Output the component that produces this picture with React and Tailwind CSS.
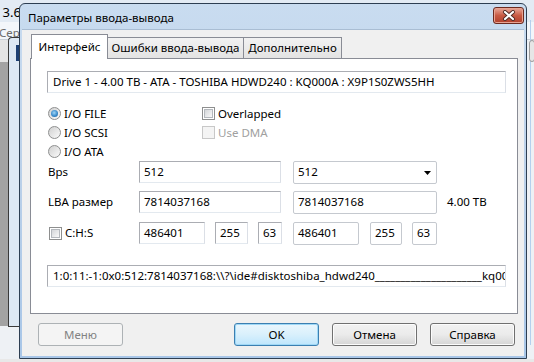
import React from "react";

const F = "font-['Noto_Sans',sans-serif]";

function Edit({ className = "", children }) {
  return (
    <div
      className={`h-[22px] shrink-0 border border-t-[#abadb3] border-l-[#abadb3] border-r-[#dbdfe6] border-b-[#e3e9ef] bg-white flex items-center pl-[4px] overflow-hidden whitespace-nowrap text-[11.5px] text-black ${className}`}
    >
      {children}
    </div>
  );
}

function Box({ className = "", children }) {
  return (
    <div
      className={`h-[23px] shrink-0 border border-[#c5c9cf] rounded-[2px] bg-white flex items-center pl-[4px] overflow-hidden whitespace-nowrap text-[11.5px] text-black ${className}`}
    >
      {children}
    </div>
  );
}

function Radio({ checked }) {
  return (
    <div className="w-[13px] h-[13px] rounded-full border border-[#8e8f8f] bg-gradient-to-br from-[#d0d0d0] to-[#fbfbfb] flex items-center justify-center shrink-0">
      {checked && (
        <div className="w-[7px] h-[7px] rounded-full bg-[radial-gradient(circle_at_45%_40%,#9fd6f7_0%,#3b8ccc_55%,#1b5a94_100%)]" />
      )}
    </div>
  );
}

function Check({ disabled }) {
  return disabled ? (
    <div className="w-[13px] h-[13px] border border-[#c8c8c8] bg-[#f4f4f4] shrink-0" />
  ) : (
    <div className="w-[13px] h-[13px] border border-[#8e8f8f] bg-white p-[1px] shrink-0">
      <div className="w-full h-full border border-[#b4b8bd] bg-gradient-to-br from-[#d4d6d9] to-[#f9f9f9]" />
    </div>
  );
}

function Button({ children, kind }) {
  if (kind === "disabled")
    return (
      <div className="w-[85px] h-[23px] rounded-[3px] border border-[#adb2b5] bg-[#f4f4f4] flex items-center justify-center text-[11.5px] text-[#838383]">
        {children}
      </div>
    );
  if (kind === "default")
    return (
      <div className="w-[85px] h-[23px] rounded-[3px] border border-[#3c7fb1] bg-gradient-to-b from-[#eaf6fd] via-[#d9f0fc] to-[#bee6fd] shadow-[inset_0_0_0_1px_#9fd8f6] flex items-center justify-center text-[11.5px] text-black">
        {children}
      </div>
    );
  return (
    <div className="w-[85px] h-[23px] rounded-[3px] border border-[#707070] bg-gradient-to-b from-[#f2f2f2] via-[#ebebeb] to-[#d5d5d5] shadow-[inset_0_0_0_1px_#fcfcfc] flex items-center justify-center text-[11.5px] text-black">
      {children}
    </div>
  );
}

export default function App() {
  return (
    <div className={`relative w-[534px] h-[362px] overflow-hidden bg-[#eef1f5] ${F}`}>
      {/* background application */}
      <div className="absolute left-0 top-0 w-[534px] h-[22px] bg-[#e3ebf4]" />
      <div className="absolute left-[-8px] top-[3px] text-[13px] text-black whitespace-nowrap">E 3.6</div>
      <div className="absolute left-0 top-[22px] w-[534px] h-[17px] bg-[#f3f6fa]" />
      <div className="absolute left-[-1px] top-[24px] text-[11.5px] text-[#6d6d6d] whitespace-nowrap">Серв</div>
      <div className="absolute left-0 top-[39px] w-[534px] h-[1px] bg-[#c9cfd6]" />
      <div className="absolute left-0 top-[40px] w-[8px] h-[22px] bg-[#e4e4e4]" />
      <div className="absolute left-0 top-[62px] w-[8px] h-[264px] bg-[#a3a3a3]" />
      <div className="absolute left-[8px] top-[37px] w-[14px] h-[290px] rounded-tl-[4px] border-l border-t border-b border-[#3a3a3a] bg-[#dde8f4]" />
      <div className="absolute left-[16px] top-[45px] w-[4px] h-[16px] bg-[#1d3f73]" />
      <div className="absolute left-[530px] top-[20px] w-[1px] h-[325px] bg-[#b4d0ee]" />
      <div className="absolute left-[529px] top-[40px] w-[6px] h-[22px] rounded-[3px] border border-[#9a9a9a] bg-[#e6e6e6]" />
      <div className="absolute left-0 top-[359px] w-[534px] h-[3px] bg-[#e8e8e8]" />

      {/* dialog window */}
      <div className="absolute left-[19px] top-[3px] w-[508px] h-[356px] rounded-t-[6px] border border-[#2d3e52] bg-gradient-to-b from-[#c9dcf0] via-[#bad0e9] to-[#a8c6e8] flex flex-col px-[2px] pb-[2px]">
        {/* title bar */}
        <div className="h-[25px] flex items-start shrink-0">
          <div className="pl-[6px] pt-[5px] text-[11.5px] text-black whitespace-nowrap">Параметры ввода-вывода</div>
          <div className="ml-auto mt-[3px] w-[31px] h-[17px] rounded-[3px] border border-[#6b2a20] bg-gradient-to-b from-[#e8a99b] via-[#c85a44] to-[#b0402c] shadow-[inset_0_0_0_1px_#e7a393] flex items-center justify-center">
            <svg width="14" height="11" viewBox="0 0 14 11">
              <path d="M3 2 L11 9 M11 2 L3 9" stroke="#4e2a25" strokeWidth="4" strokeLinecap="round" />
              <path d="M3 2 L11 9 M11 2 L3 9" stroke="#ffffff" strokeWidth="2.2" strokeLinecap="round" />
            </svg>
          </div>
        </div>

        {/* client area */}
        <div className="flex-1 bg-[#f0f0f0] flex flex-col border-t border-[#a9bdd3]">
          {/* tabs */}
          <div className="flex items-end pl-[9px] pt-[3px] h-[28px] shrink-0">
            <div className="relative z-10 h-[25px] -mb-[1px] w-[77px] border border-b-0 border-[#898c95] bg-white flex items-start justify-center pt-[3px] text-[11.5px] text-black">
              Интерфейс
            </div>
            <div className="h-[21px] w-[137px] -ml-[1px] border border-b-0 border-[#898c95] bg-gradient-to-b from-[#f2f2f2] to-[#e3e3e3] flex items-center justify-center text-[11.5px] text-black whitespace-nowrap">
              Ошибки ввода-вывода
            </div>
            <div className="h-[21px] w-[99px] -ml-[1px] border border-b-0 border-[#898c95] bg-gradient-to-b from-[#f2f2f2] to-[#e3e3e3] flex items-center justify-center text-[11.5px] text-black whitespace-nowrap">
              Дополнительно
            </div>
          </div>

          {/* panel */}
          <div className="ml-[8px] w-[488px] h-[256px] shrink-0 border border-[#898c95] bg-white pl-[16px] pt-[12px] flex flex-col">
            <Edit className="w-[459px] pl-[5px]">Drive 1 - 4.00 TB - ATA - TOSHIBA HDWD240 : KQ000A : X9P1S0ZWS5HH</Edit>

            <div className="mt-[11px] flex">
              <div className="w-[155px] flex flex-col pl-[1px]">
                <div className="h-[19px] flex items-center gap-[3px] text-[11.5px] text-black">
                  <Radio checked />
                  <span>I/O FILE</span>
                </div>
                <div className="h-[19px] flex items-center gap-[3px] text-[11.5px] text-black">
                  <Radio />
                  <span>I/O SCSI</span>
                </div>
                <div className="h-[19px] flex items-center gap-[3px] text-[11.5px] text-black">
                  <Radio />
                  <span>I/O ATA</span>
                </div>
              </div>
              <div className="flex flex-col">
                <div className="h-[19px] flex items-center gap-[3px] text-[11.5px] text-black">
                  <Check />
                  <span>Overlapped</span>
                </div>
                <div className="h-[19px] flex items-center gap-[3px] text-[11.5px] text-[#a0a0a0]">
                  <Check disabled />
                  <span>Use DMA</span>
                </div>
              </div>
            </div>

            <div className="h-[22px] flex items-center">
              <div className="w-[92px] pl-[1px] text-[11.5px] text-black">Bps</div>
              <Edit className="w-[142px]">512</Edit>
              <Box className="ml-[12px] w-[144px] relative">
                512
                <svg className="absolute right-[5px] top-[9px]" width="7" height="4" viewBox="0 0 7 4">
                  <path d="M0 0 H7 L3.5 4 Z" fill="#000" />
                </svg>
              </Box>
            </div>

            <div className="mt-[8px] h-[22px] flex items-center">
              <div className="w-[92px] pl-[1px] text-[11.5px] text-black whitespace-nowrap">LBA размер</div>
              <Edit className="w-[142px]">7814037168</Edit>
              <Box className="ml-[12px] w-[144px]">7814037168</Box>
              <div className="ml-[10px] text-[11.5px] text-black whitespace-nowrap">4.00 TB</div>
            </div>

            <div className="mt-[9px] h-[22px] flex items-center">
              <div className="w-[92px] pl-[2px] flex items-center gap-[3px] text-[11.5px] text-black">
                <Check />
                <span>C:H:S</span>
              </div>
              <Edit className="w-[66px]">486401</Edit>
              <Edit className="ml-[10px] w-[33px]">255</Edit>
              <Edit className="ml-[10px] w-[24px]">63</Edit>
              <Box className="ml-[11px] w-[66px]">486401</Box>
              <Box className="ml-[11px] w-[32px]">255</Box>
              <Box className="ml-[10px] w-[25px]">63</Box>
            </div>

            <Edit className="mt-[21px] w-[459px] pl-[5px]">
              {"1:0:11:-1:0x0:512:7814037168:\\\\?\\ide#disktoshiba_hdwd240_____________________kq000a"}
            </Edit>
          </div>

          {/* buttons */}
          <div className="mt-[9px] pl-[16px] pr-[9px] flex items-center">
            <Button kind="disabled">Меню</Button>
            <div className="ml-auto flex gap-[13px]">
              <Button kind="default">OK</Button>
              <Button>Отмена</Button>
              <Button>Справка</Button>
            </div>
          </div>
        </div>
      </div>
    </div>
  );
}
